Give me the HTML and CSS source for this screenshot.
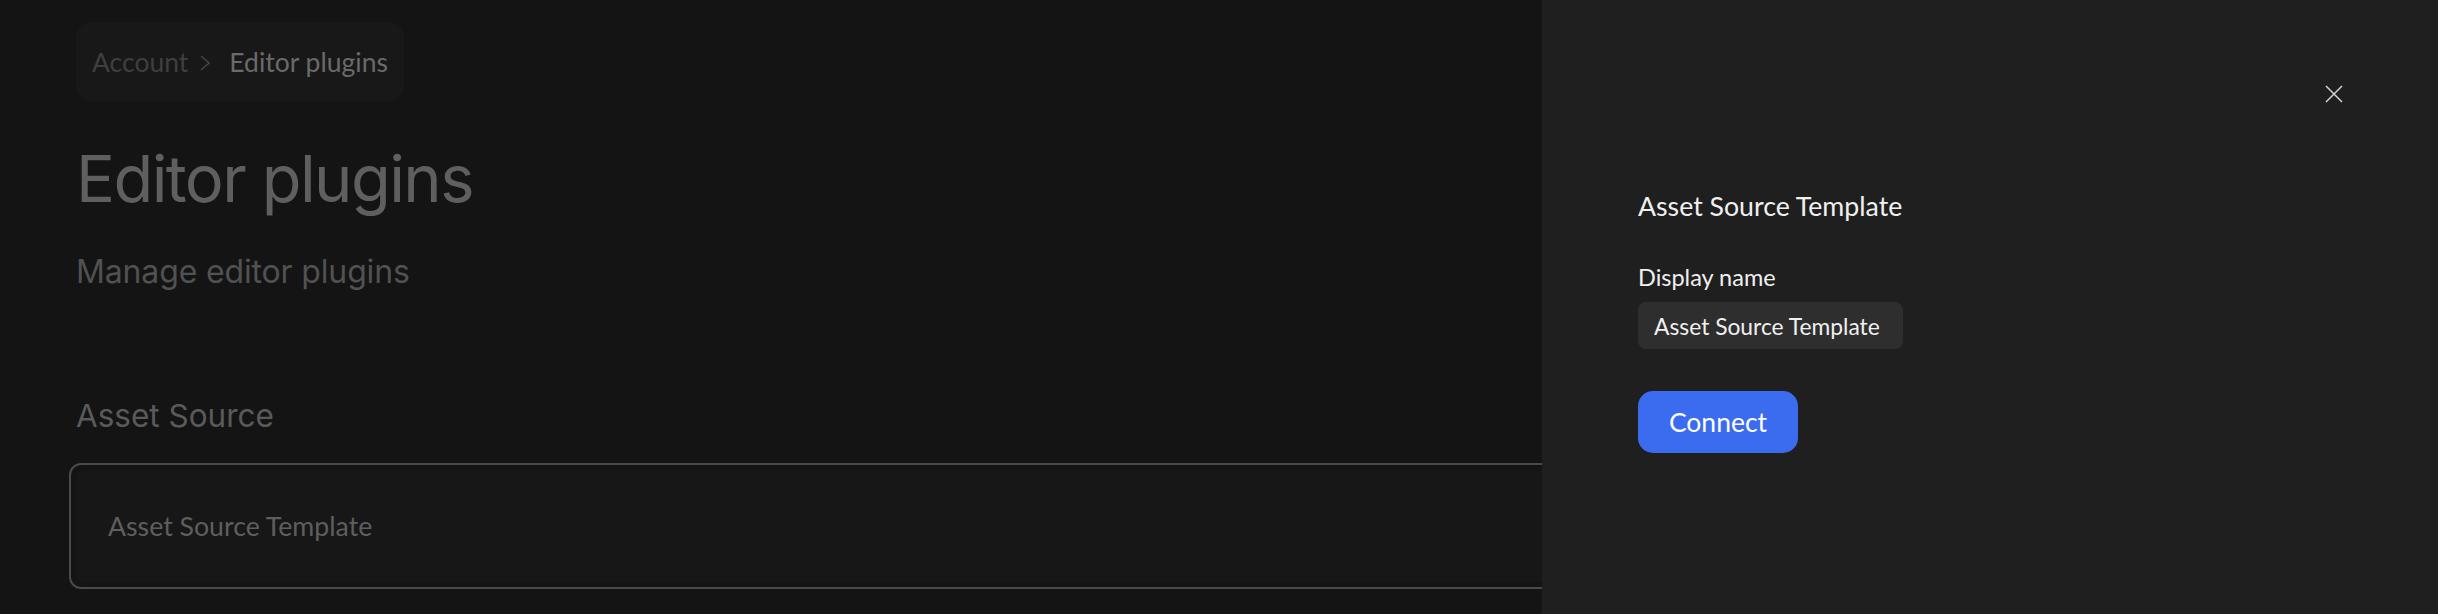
FILE: index.html
```html
<!DOCTYPE html>
<html>
	<head>
		<title>Editor plugins</title>
		<link rel="stylesheet" href="styles.css">
	</head>
	<body>
		<main class="page">
			<nav class="crumbs">
				<span class="crumb">Account</span>
				<svg class="crumb-sep" width="10" height="24" viewBox="0 0 10 24">
					<path d="M1 6 L9 13 L1 20" fill="none" stroke="#444" stroke-width="1.6"/>
				</svg>
				<span class="crumb current">Editor plugins</span>
			</nav>

			<h1 class="title">Editor plugins</h1>
			<p class="subtitle">Manage editor plugins</p>

			<h2 class="section-title">Asset Source</h2>
			<div class="plugin-card">
				<div class="plugin-card-inner">Asset Source Template</div>
			</div>
		</main>

		<aside class="drawer">
			<div class="drawer-head">
				<button class="close" type="button" aria-label="Close">
					<svg width="18" height="18" viewBox="0 0 18 18">
						<path d="M1 1 L17 17 M17 1 L1 17" stroke="#d4d4d4" stroke-width="1.5"/>
					</svg>
				</button>
			</div>
			<form class="drawer-form">
				<h3 class="drawer-title">Asset Source Template</h3>
				<label class="field-label" for="displayName">Display name</label>
				<input class="field-input" id="displayName" type="text" value="Asset Source Template" autocomplete="off">
				<button class="connect" type="button">Connect</button>
			</form>
		</aside>
	</body>
</html>
```

FILE: styles.css
```css
*
	{
		box-sizing: border-box;
	}
html, body
	{
		margin: 0;
		height: 100%;
		overflow: hidden;
	}
body
	{
		background-color: #141414;
		font-family: Lato, "Noto Sans", sans-serif;
	}
.page
	{
		padding: 22px 69px 0 76px;
	}
.crumbs
	{
		display: inline-flex;
		align-items: center;
		height: 79px;
		padding: 0 16px;
		border-radius: 15px;
		background-color: #181818;
		font-size: 26.5px;
	}
.crumb
	{
		color: #3f3f3f;
	}
.crumb.current
	{
		color: #6a6a6a;
	}
.crumb-sep
	{
		margin: 0 19px 0 12px;
	}
.title
	{
		margin: 38px 0 0;
		font-family: Inter, Roboto, sans-serif;
		font-weight: 400;
		font-size: 65px;
		line-height: 79px;
		color: #5f5f5f;
		letter-spacing: -1.6px;
	}
.subtitle
	{
		margin: 34px 0 0;
		font-family: Inter, Roboto, sans-serif;
		font-size: 32px;
		line-height: 39px;
		color: #515151;
		letter-spacing: -0.15px;
	}
.section-title
	{
		margin: 106px 0 0;
		font-family: Inter, Roboto, sans-serif;
		font-weight: 400;
		font-size: 31.5px;
		line-height: 37px;
		color: #5a5a5a;
	}
.plugin-card
	{
		margin: 29px 0 0 -7px;
		height: 126px;
		padding: 5px;
		border: 2px solid #4a4a4a;
		border-radius: 12px;
		background-color: #141414;
	}
.plugin-card-inner
	{
		display: flex;
		align-items: center;
		height: 100%;
		padding-left: 32px;
		border-radius: 8px;
		background-color: #171717;
		font-size: 26.7px;
		color: #5e5e5e;
	}
.drawer
	{
		position: fixed;
		top: 0;
		right: 0;
		bottom: 0;
		width: 896px;
		padding: 0 95px 0 96px;
		background-color: #1f1f1f;
		color: #f0f0f0;
	}
.drawer-head
	{
		display: flex;
		justify-content: flex-end;
		padding-top: 85px;
	}
.close
	{
		display: block;
		width: 18px;
		height: 18px;
		padding: 0;
		border: none;
		background: none;
	}
.close svg
	{
		display: block;
	}
.drawer-form
	{
		display: flex;
		flex-direction: column;
		align-items: flex-start;
	}
.drawer-title
	{
		margin: 87px 0 0;
		font-weight: 400;
		font-size: 26.7px;
		line-height: 32px;
	}
.field-label
	{
		margin-top: 41px;
		font-size: 23.5px;
		line-height: 28px;
	}
.field-input
	{
		margin-top: 11px;
		width: 265px;
		height: 47px;
		padding: 0 16px;
		border: none;
		border-radius: 8px;
		background-color: #2e2e2e;
		color: #f0f0f0;
		font-family: Lato, "Noto Sans", sans-serif;
		font-size: 22.8px;
		outline: none;
	}
.connect
	{
		margin-top: 42px;
		width: 160px;
		height: 62px;
		border: none;
		border-radius: 15px;
		background-color: #3b6cf0;
		color: #ffffff;
		font-family: Lato, "Noto Sans", sans-serif;
		font-size: 26.5px;
	}
```
